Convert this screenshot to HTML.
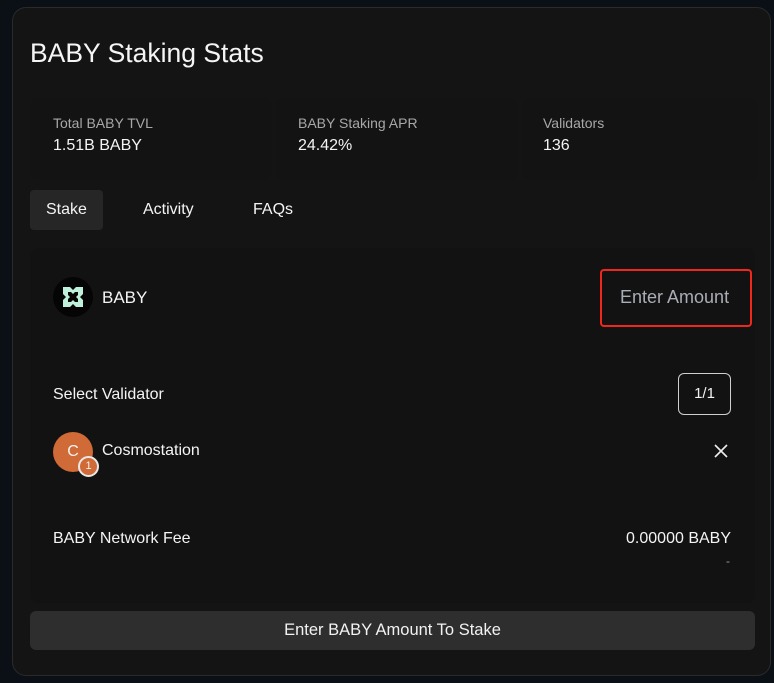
<!DOCTYPE html>
<html><head><style>
*{box-sizing:border-box;margin:0;padding:0}
body{width:774px;height:683px;background:#0b1016;font-family:"Liberation Sans",sans-serif;color:#f2f2f2;position:relative;overflow:hidden}
.card{position:absolute;left:12px;top:7px;width:759px;height:669px;background:#141414;border:1px solid #2a2a2a;border-radius:14px}
.abs{position:absolute}
.lbl{font-size:14px;color:#a8a8a8}
.val{font-size:16px;color:#f4f4f4}
.stat{position:absolute;top:90px;height:82px;background:#131313;border-radius:8px}
</style></head><body>
<div class="card">
<div class="abs" style="left:17px;top:30px;font-size:26.5px;color:#f5f5f5">BABY Staking Stats</div>
<div class="stat" style="left:17px;width:242px"></div>
<div class="stat" style="left:263px;width:242px"></div>
<div class="stat" style="left:509px;width:236px"></div>
<div class="abs lbl" style="left:40px;top:107px">Total BABY TVL</div>
<div class="abs val" style="left:40px;top:129px">1.51B BABY</div>
<div class="abs lbl" style="left:285px;top:107px">BABY Staking APR</div>
<div class="abs val" style="left:285px;top:129px">24.42%</div>
<div class="abs lbl" style="left:530px;top:107px">Validators</div>
<div class="abs val" style="left:530px;top:129px">136</div>
<div class="abs" style="left:17px;top:182px;width:73px;height:40px;background:#262626;border-radius:4px"></div>
<div class="abs val" style="left:33px;top:193px">Stake</div>
<div class="abs val" style="left:130px;top:193px">Activity</div>
<div class="abs val" style="left:240px;top:193px">FAQs</div>
<div class="abs" style="left:17px;top:240px;width:725px;height:355px;background:#121212;border-radius:8px"></div>
<div class="abs" style="left:40px;top:269px;width:40px;height:40px;border-radius:50%;background:#050505"></div>
<svg class="abs" style="left:47px;top:276px" width="26" height="26" viewBox="0 0 26 26"><path d="M3 3h7l3 3 3-3h7v7l-3 3 3 3v7h-7l-3-3-3 3H3v-7l3-3-3-3z M8 8v3l2 2-2 2v3h3l2-2 2 2h3v-3l-2-2 2-2V8h-3l-2 2-2-2z" fill="#bff0dc" fill-rule="evenodd"/></svg>
<div class="abs val" style="left:89px;top:280px;font-size:17px">BABY</div>
<div class="abs" style="left:587px;top:261px;width:152px;height:58px;border:2px solid #f0281c;border-radius:4px"></div>
<div class="abs" style="left:607px;top:279px;font-size:18px;color:#a9adb5">Enter Amount</div>
<div class="abs val" style="left:40px;top:378px">Select Validator</div>
<div class="abs" style="left:665px;top:365px;width:53px;height:42px;border:1px solid #cfcfcf;border-radius:6px;text-align:center;line-height:40px;font-size:15px">1/1</div>
<div class="abs" style="left:40px;top:424px;width:40px;height:40px;border-radius:50%;background:#d06a36;text-align:center;line-height:40px;font-size:16px">C</div>
<div class="abs" style="left:65px;top:448px;width:21px;height:21px;border-radius:50%;background:#d06a36;border:2px solid #e8e8e8;text-align:center;line-height:17px;font-size:11px">1</div>
<div class="abs val" style="left:89px;top:434px">Cosmostation</div>
<svg class="abs" style="left:701px;top:436px" width="14" height="14"><path d="M1 1L13 13M13 1L1 13" stroke="#eee" stroke-width="1.6"/></svg>
<div class="abs val" style="left:40px;top:522px">BABY Network Fee</div>
<div class="abs val" style="right:39px;top:522px">0.00000 BABY</div>
<div class="abs" style="right:40px;top:546px;font-size:12px;color:#999">-</div>
<div class="abs" style="left:17px;top:603px;width:725px;height:39px;background:#2e2e2e;border-radius:6px;text-align:center;line-height:39px;font-size:16.5px">Enter BABY Amount To Stake</div>
</div>
</body></html>
